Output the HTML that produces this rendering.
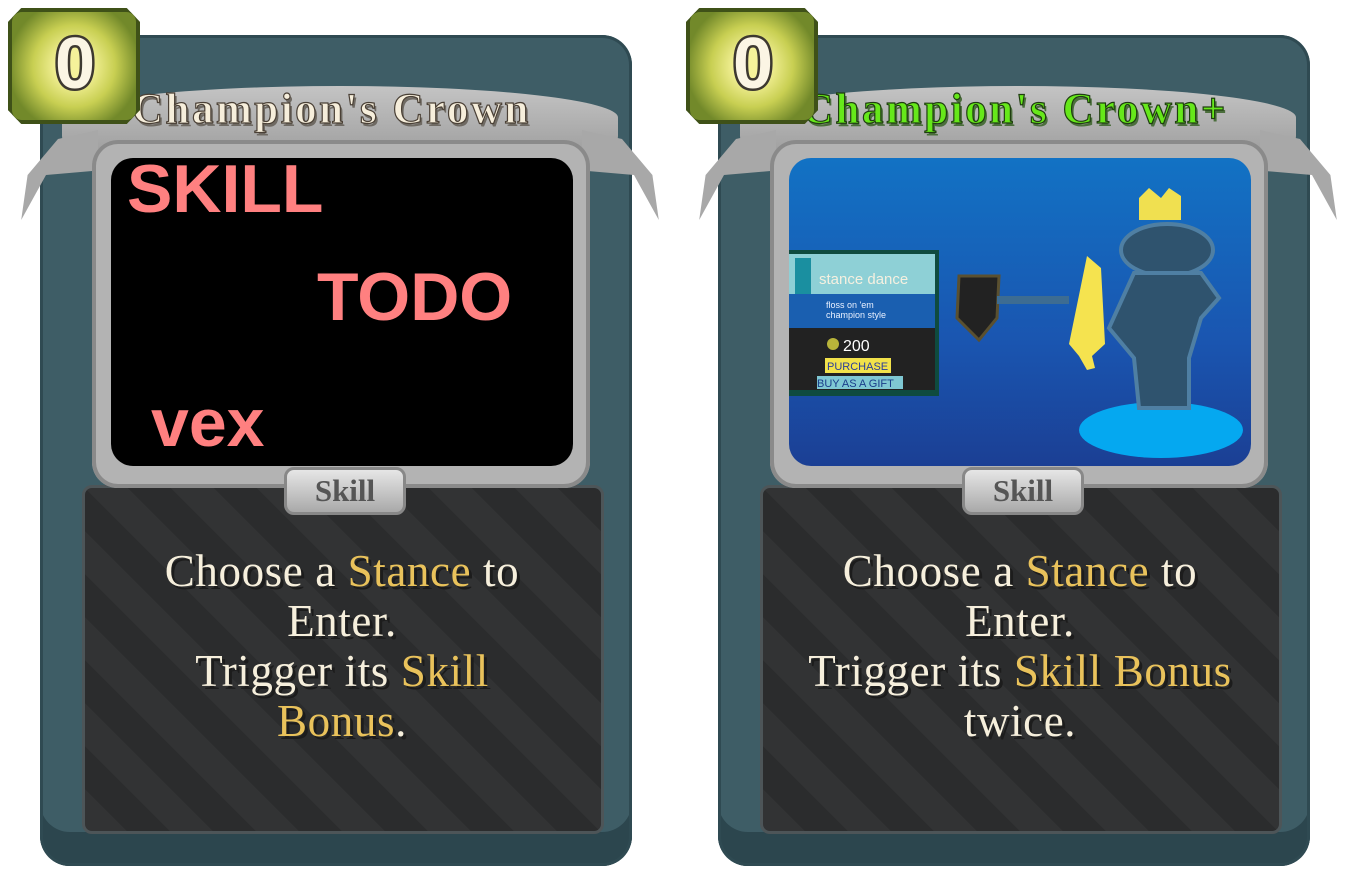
<!DOCTYPE html>
<html><head><meta charset="utf-8"><style>
body{margin:0;width:1356px;height:874px;background:#fff;position:relative;overflow:hidden;font-family:"Liberation Serif",serif}
.card{position:absolute;top:0;width:678px;height:874px}
.body{position:absolute;left:40px;top:35px;width:592px;height:831px;background:#3e5d66;border-radius:30px;box-shadow:inset 0 0 0 3px #2f4a52, inset 0 -34px 0 #2c464e}
.panel{position:absolute;left:82px;top:485px;width:516px;height:343px;border-radius:10px;background:#2b2c2d;border:3px solid #4d5558;
background-image:linear-gradient(45deg,rgba(255,255,255,.035) 25%,transparent 25%,transparent 50%,rgba(255,255,255,.035) 50%,rgba(255,255,255,.035) 75%,transparent 75%);background-size:86px 86px}
.banner{position:absolute;left:62px;top:86px;width:556px;height:70px;background:linear-gradient(#c4c4c4,#9e9e9e);border-radius:50% 50% 20px 20px/45% 45% 20px 20px}
.wingL,.wingR{position:absolute;top:130px;width:80px;height:90px;background:#a8a8a8;}
.wingL{left:18px;clip-path:polygon(100% 0,100% 45%,35% 50%,4% 100%,12% 50%,50% 10%)}
.wingR{left:582px;clip-path:polygon(0 0,0 45%,65% 50%,96% 100%,88% 50%,50% 10%)}
.frame{position:absolute;left:92px;top:140px;width:498px;height:348px;background:#b3b3b3;border-radius:26px;box-shadow:inset 0 0 0 4px #8a8a8a}
.art{position:absolute;left:111px;top:158px;width:462px;height:308px;border-radius:22px;background:#000;overflow:hidden}
.title{position:absolute;left:132px;top:85px;font-size:43px;font-weight:bold;letter-spacing:2.5px;color:#f6eedb;-webkit-text-stroke:1.2px #4a4036;text-shadow:2px 3px 0 #6f6a63;white-space:nowrap}
.cost{position:absolute;left:8px;top:8px;width:124px;height:108px;background:radial-gradient(circle,#f5f29a 20%,#c8cf52 50%,#72892a 80%);border:4px solid #3f5118;border-radius:14px;clip-path:polygon(10% 0,90% 0,100% 12%,100% 88%,90% 100%,10% 100%,0 88%,0 12%)}
.cost span{position:absolute;left:28px;top:10px;width:70px;height:80px;font-family:"Liberation Sans",sans-serif;font-weight:bold;font-size:72px;color:#fbf5e4;-webkit-text-stroke:5px #3d3830;paint-order:stroke fill;text-align:center;line-height:84px}
.tag{position:absolute;left:284px;top:467px;width:116px;height:42px;background:linear-gradient(#e6e6e6,#a9a9a9);border:3px solid #888;border-radius:10px;text-align:center;font-size:31px;font-weight:bold;line-height:42px;color:#555}
.desc{position:absolute;left:72px;top:546px;width:540px;text-align:center;font-size:45px;line-height:50px;color:#f6efdc;text-shadow:3px 3px 0 #1c1c1c;letter-spacing:0.6px}
.g{color:#e9c25b}
.todo{position:absolute;font-family:"Liberation Sans",sans-serif;font-weight:bold;color:#ff8080;font-size:68px}
</style></head><body>

<div class="card" style="left:0">
 <div class="body"></div><div class="panel"></div>
 <div class="banner"></div>
 <div class="wingL"></div><div class="wingR"></div>
 <div class="frame"></div>
 <div class="art">
  <div class="todo" style="left:16px;top:-8px">SKILL</div>
  <div class="todo" style="left:206px;top:100px">TODO</div>
  <div class="todo" style="left:40px;top:226px">vex</div>
 </div>
 <div class="title">Champion's Crown</div>
 <div class="cost"><span>0</span></div>
 <div class="tag">Skill</div>
 <div class="desc">Choose a <span class="g">Stance</span> to<br>Enter.<br>Trigger its <span class="g">Skill</span><br><span class="g">Bonus</span>.</div>
</div>

<div class="card" style="left:678px">
 <div class="body"></div><div class="panel"></div>
 <div class="banner"></div>
 <div class="wingL"></div><div class="wingR"></div>
 <div class="frame"></div>
 <div class="art" style="background:linear-gradient(#1272c4,#1a55b0 60%,#1b3f94)">
  <svg width="462" height="308" style="position:absolute;left:0;top:0">
   <rect x="-8" y="92" width="158" height="146" fill="#0f4b3f"/>
   <rect x="-4" y="96" width="150" height="40" fill="#8ed0d6"/>
   <rect x="6" y="100" width="16" height="44" fill="#1a8fa0"/>
   <rect x="-4" y="136" width="150" height="34" fill="#1a5fb0"/>
   <rect x="-4" y="170" width="150" height="62" fill="#222"/>
   <text x="30" y="126" font-family="Liberation Sans" font-size="15" fill="#f5f0e0">stance dance</text>
   <text x="37" y="150" font-family="Liberation Sans" font-size="9" fill="#e8f0ff">floss on 'em</text>
   <text x="37" y="160" font-family="Liberation Sans" font-size="9" fill="#e8f0ff">champion style</text>
   <circle cx="44" cy="186" r="6" fill="#b8b43a"/>
   <text x="54" y="193" font-family="Liberation Sans" font-size="16" fill="#fff">200</text>
   <rect x="36" y="200" width="66" height="15" fill="#f2e24a"/>
   <text x="38" y="212" font-family="Liberation Sans" font-size="11" fill="#2a3d9a">PURCHASE</text>
   <rect x="28" y="218" width="86" height="13" fill="#7fc8d3"/>
   <text x="28" y="229" font-family="Liberation Sans" font-size="11" fill="#1a3d8a">BUY AS A GIFT</text>
   <ellipse cx="372" cy="272" rx="82" ry="28" fill="#05a8f0"/>
   <path d="M170 118 L210 118 L208 160 L190 182 L168 160 Z" fill="#222" stroke="#5a5030" stroke-width="3"/>
   <path d="M208 138 L280 138 L280 146 L208 146 Z" fill="#3d6c92"/>
   <ellipse cx="378" cy="92" rx="46" ry="26" fill="#2f536e" stroke="#4f7fa3" stroke-width="4"/>
   <path d="M345 115 L412 115 L430 140 L412 160 L400 200 L400 250 L350 250 L345 200 L320 170 Z" fill="#2f536e" stroke="#4f7fa3" stroke-width="4"/>
   <path d="M350 40 L360 30 L372 40 L380 30 L392 38 L392 62 L350 62 Z" fill="#f0e050"/>
   <path d="M298 98 L312 110 L316 186 L303 198 L306 210 L298 212 L290 198 L280 186 Z" fill="#f5e34f"/>
  </svg>
 </div>
 <div class="title" style="left:124px;color:#66e81a;-webkit-text-stroke:1.2px #1f3d10;text-shadow:2px 3px 0 #4b6e3c">Champion's Crown+</div>
 <div class="cost"><span>0</span></div>
 <div class="tag">Skill</div>
 <div class="desc">Choose a <span class="g">Stance</span> to<br>Enter.<br>Trigger its <span class="g">Skill Bonus</span><br>twice.</div>
</div>
</body></html>
